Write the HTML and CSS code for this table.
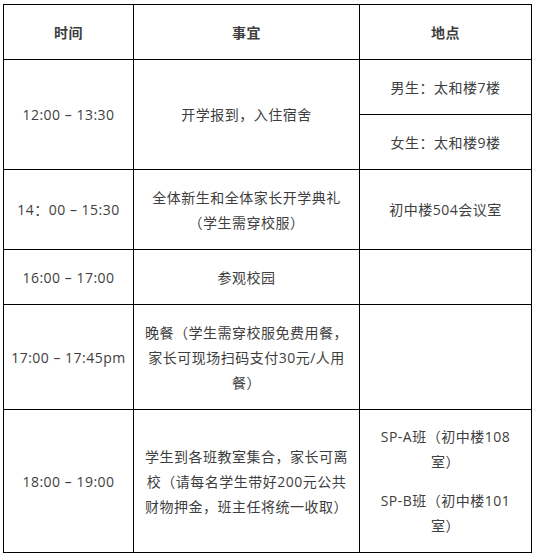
FILE: index.html
```html
<!DOCTYPE html>
<html lang="zh-CN">
<head>
<meta charset="utf-8">
<title>日程安排</title>
<link rel="stylesheet" href="styles.css">
</head>
<body>
<table class="schedule">
  <colgroup>
    <col class="c-time">
    <col class="c-event">
    <col class="c-place">
  </colgroup>
  <tr class="r-head">
    <th class="time">时间</th>
    <th>事宜</th>
    <th class="place">地点</th>
  </tr>
  <tr class="r-half">
    <td class="time" rowspan="2">12:00 – 13:30</td>
    <td rowspan="2">开学报到，入住宿舍</td>
    <td class="place">男生：太和楼7楼</td>
  </tr>
  <tr class="r-half">
    <td class="place">女生：太和楼9楼</td>
  </tr>
  <tr class="r-ceremony">
    <td class="time">14：00 – 15:30</td>
    <td>全体新生和全体家长开学典礼<br>（学生需穿校服）</td>
    <td class="place">初中楼504会议室</td>
  </tr>
  <tr class="r-visit">
    <td class="time">16:00 – 17:00</td>
    <td>参观校园</td>
    <td class="place"></td>
  </tr>
  <tr class="r-dinner">
    <td class="time">17:00 – 17:45pm</td>
    <td>晚餐（学生需穿校服免费用餐，家长可现场扫码支付30元/人用餐）</td>
    <td class="place"></td>
  </tr>
  <tr class="r-class">
    <td class="time">18:00 – 19:00</td>
    <td>学生到各班教室集合，家长可离校（请每名学生带好200元公共财物押金，班主任将统一收取）</td>
    <td class="place">
      <p class="room">SP-A班（初中楼108室）</p>
      <p class="room">SP-B班（初中楼101室）</p>
    </td>
  </tr>
</table>
</body>
</html>
```

FILE: styles.css
```css
html, body {
  margin: 0;
  padding: 0;
  background: #ffffff;
}

body {
  padding: 4px 0 0 3px;
  font-family: "Open Sans", "Noto Sans CJK SC", sans-serif;
  font-size: 14px;
  letter-spacing: 0.5px;
  color: #3e3e3e;
}

.schedule {
  border-collapse: collapse;
  table-layout: fixed;
  width: 528px;
}

.c-time { width: 130px; }
.c-event { width: 226px; }
.c-place { width: 172px; }

.schedule th,
.schedule td {
  border: 1px solid #000;
  padding: 0 8px;
  text-align: center;
  vertical-align: middle;
  line-height: 25px;
}

.schedule .time {
  padding: 0 4px;
  white-space: nowrap;
}

.schedule .place {
  padding: 0 12px;
}

.schedule th {
  font-weight: bold;
}

.r-head { height: 55px; }
.r-half { height: 55px; }
.r-ceremony { height: 80px; }
.r-visit { height: 55px; }
.r-dinner { height: 105px; }
.r-class { height: 143px; }

.room {
  margin: 0;
}

.room + .room {
  margin-top: 14px;
}
```
